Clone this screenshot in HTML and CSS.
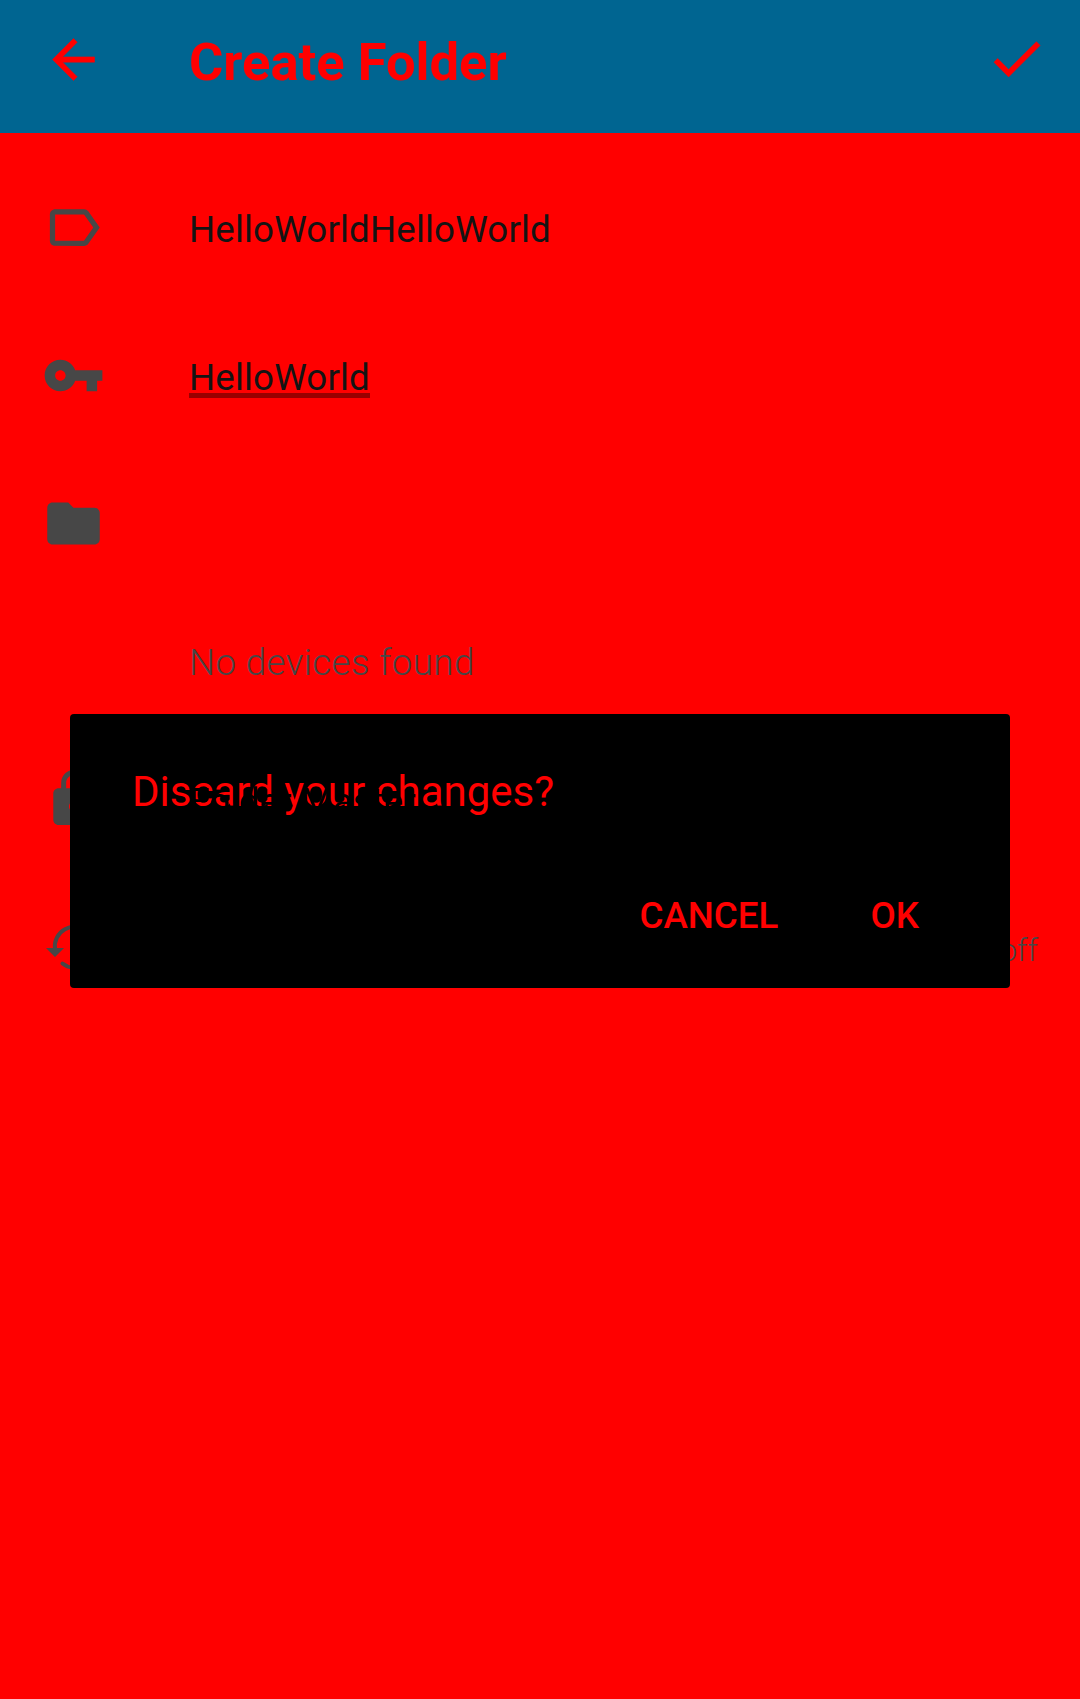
FILE: index.html
```html
<!DOCTYPE html>
<html lang="en">
<head>
<meta charset="utf-8">
<title>Create Folder</title>
<link rel="stylesheet" href="styles.css">
</head>
<body>
<header class="toolbar">
  <svg class="icon" viewBox="0 0 24 24"><path d="M20 11H7.83l5.59-5.59L12 4l-8 8 8 8 1.41-1.41L7.83 13H20v-2z"/></svg>
  <h1 class="title">Create Folder</h1>
  <svg class="icon check" viewBox="0 0 24 24"><path d="M9 16.17L4.83 12l-1.42 1.41L9 19 21 7l-1.41-1.41z"/></svg>
</header>
<main class="form">
  <div class="row">
    <svg class="icon" viewBox="0 0 24 24"><path d="M17.63 5.84C17.27 5.33 16.67 5 16 5L5 5.01C3.9 5.01 3 5.9 3 7v10c0 1.1.9 1.99 2 1.99L16 19c.67 0 1.27-.33 1.63-.84L22 12l-4.37-6.16zM16 17H5V7h11l3.55 5L16 17z"/></svg>
    <span class="value">HelloWorldHelloWorld</span>
  </div>
  <div class="row">
    <svg class="icon" viewBox="0 0 24 24"><path d="M12.65 10C11.83 7.67 9.61 6 7 6c-3.31 0-6 2.69-6 6s2.69 6 6 6c2.61 0 4.83-1.67 5.65-4H17v4h4v-4h2v-4H12.65zM7 14c-1.1 0-2-.9-2-2s.9-2 2-2 2 .9 2 2-.9 2-2 2z"/></svg>
    <span class="value composing">HelloWorld</span>
  </div>
  <div class="row">
    <svg class="icon" viewBox="0 0 24 24"><path d="M10 4H4c-1.1 0-1.99.9-1.99 2L2 18c0 1.1.9 2 2 2h16c1.1 0 2-.9 2-2V8c0-1.1-.9-2-2-2h-8l-2-2z"/></svg>
  </div>
  <p class="empty">No devices found</p>
  <div class="row">
    <svg class="icon" viewBox="-.3 .3 24 24"><path d="M18 8h-1V6c0-2.76-2.24-5-5-5S7 3.24 7 6v2H6c-1.1 0-2 .9-2 2v10c0 1.1.9 2 2 2h12c1.1 0 2-.9 2-2V10c0-1.1-.9-2-2-2zm-6 9c-1.100 0-2-.9-2-2s.9-2 2-2 2 .9 2 2-.9 2-2 2zm3.100-9H8.900V6c0-1.710 1.390-3.100 3.100-3.100s3.100 1.390 3.100 3.100v2z"/></svg>
    <span class="value master">Folder Master</span>
  </div>
  <div class="row">
    <svg class="icon" viewBox="0 0 63 63"><path class="arc" d="M13 33A19.500 19.500 0 0 1 45 15.500M20.500 47.500A19.500 19.500 0 0 0 52 30"/><path d="M4 32h18l-9 9zM43 31h18l-9-9z"/></svg>
    <span class="state">off</span>
  </div>
</main>
<section class="dialog">
  <h2 class="question">Discard your changes?</h2>
  <div class="actions"><button>CANCEL</button><button>OK</button></div>
</section>
</body>
</html>
```
FILE: styles.css
```css
* { box-sizing: border-box; }
body { margin: 0; height: 1699px; background: #f00; font-family: Roboto, sans-serif; overflow: hidden; }
h1, h2, p { margin: 0; font-weight: 400; }
.icon { width: 63px; height: 63px; flex: none; fill: currentColor; }
.toolbar { height: 133px; padding: 28px 32px 0 42px; display: flex; background: #006591; color: #f00; }
.toolbar .icon { stroke: currentColor; stroke-width: .2; }
.check { margin-top: -1px; }
.title { flex: 1; padding-left: 84px; font-size: 52.5px; line-height: 68px; font-weight: 700; }
.form { padding: 20px 42px 0; color: #474747; }
.row { height: 148px; display: flex; align-items: center; }
.value { padding-top: 4px; margin-left: 84px; font-size: 36.75px; letter-spacing: .13px; color: #141414; }
.composing { padding: 0; margin-top: 4px; height: 41px; line-height: 42px; border-bottom: 5px solid #900; }
.empty { height: 128px; padding-left: 147px; font-size: 36.75px; line-height: 131px; font-weight: 300; letter-spacing: .36px; }
.master { position: relative; z-index: 2; letter-spacing: 0; color: #000; }
.state { margin-left: auto; padding-top: 6px; font-size: 31.5px; font-weight: 300; }
.arc { fill: none; stroke: currentColor; stroke-width: 4; stroke-linecap: round; }
.dialog { position: absolute; left: 70px; top: 714px; width: 940px; height: 274px; padding: 52px 91px 0 62px; border-radius: 4px; background: #000; color: #f00; }
.question { font-size: 42px; line-height: 52px; }
.actions { margin-top: 72px; display: flex; justify-content: flex-end; gap: 92px; }
.actions button { padding: 0; border: 0; background: none; color: inherit; font: 500 36.75px/52px Roboto, sans-serif; }
```
